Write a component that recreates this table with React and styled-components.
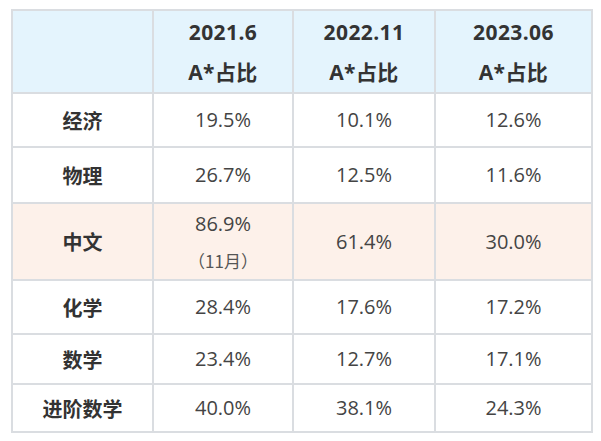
import React from "react";
import styled, { createGlobalStyle } from "styled-components";

const Global = createGlobalStyle`
  html, body { margin: 0; padding: 0; background: #ffffff; }
  body { font-family: "Open Sans", "Noto Sans CJK SC", sans-serif; color: #333; }
`;

const Page = styled.div`
  padding: 9px 0 0 11px;
`;

const Table = styled.table`
  border-collapse: collapse;
  table-layout: fixed;
  width: 580px;
  border: 2px solid #dadde1;
`;

const Col = styled.col`
  width: ${(p) => p.$w}px;
`;

const HeadRow = styled.tr`
  background: #e4f4fd;
  height: 83px;
`;

const Row = styled.tr`
  background: ${(p) => (p.$hl ? "#fdf1ea" : "#ffffff")};
  height: ${(p) => p.$h}px;
`;

const Th = styled.th`
  border: 2px solid #dadde1;
  padding: 0;
  text-align: center;
  font-family: "Open Sans", "Noto Sans CJK SC", sans-serif;
  font-weight: 700;
  font-size: 21px;
  color: #333;
  line-height: 40px;
  letter-spacing: 0.4px;
`;

const Label = styled.td`
  border: 2px solid #dadde1;
  padding: 0;
  text-align: center;
  font-family: "Noto Sans CJK SC", sans-serif;
  font-weight: 700;
  font-size: 20px;
  color: #333;
`;

const Cell = styled.td`
  border: 2px solid #dadde1;
  padding: 0;
  text-align: center;
  font-family: "Open Sans", "Noto Sans CJK SC", sans-serif;
  font-size: 20px;
  color: #444;
`;

const Main = styled.div`
  line-height: 26px;
`;

const Note = styled.div`
  font-size: 17px;
  color: #555;
  line-height: 22px;
  margin-top: 13px;
  font-family: "Noto Sans CJK SC", sans-serif;
`;

const headers = ["2021.6", "2022.11", "2023.06"];

const rows = [
  { name: "经济", vals: ["19.5%", "10.1%", "12.6%"], h: 54 },
  { name: "物理", vals: ["26.7%", "12.5%", "11.6%"], h: 56 },
  { name: "中文", vals: ["86.9%", "61.4%", "30.0%"], h: 77, hl: true, note: "（11月）" },
  { name: "化学", vals: ["28.4%", "17.6%", "17.2%"], h: 54 },
  { name: "数学", vals: ["23.4%", "12.7%", "17.1%"], h: 50 },
  { name: "进阶数学", vals: ["40.0%", "38.1%", "24.3%"], h: 48 },
];

export default function App() {
  return (
    <Page>
      <Global />
      <Table>
        <colgroup>
          <Col $w={141} />
          <Col $w={140} />
          <Col $w={142} />
          <Col $w={157} />
        </colgroup>
        <thead>
          <HeadRow>
            <Th />
            {headers.map((h) => (
              <Th key={h}>
                <div>{h}</div>
                <div>A*占比</div>
              </Th>
            ))}
          </HeadRow>
        </thead>
        <tbody>
          {rows.map((r) => (
            <Row key={r.name} $h={r.h} $hl={r.hl}>
              <Label>{r.name}</Label>
              {r.vals.map((v, i) => (
                <Cell key={i}>
                  <Main>{v}</Main>
                  {i === 0 && r.note ? <Note>{r.note}</Note> : null}
                </Cell>
              ))}
            </Row>
          ))}
        </tbody>
      </Table>
    </Page>
  );
}
